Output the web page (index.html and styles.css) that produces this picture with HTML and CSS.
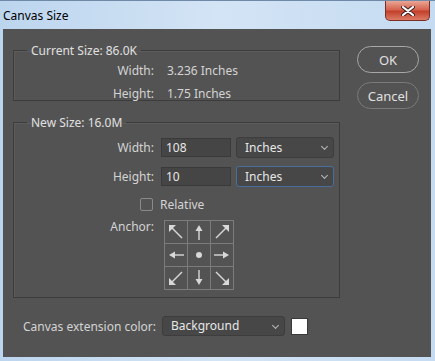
FILE: index.html
```html
<!DOCTYPE html>
<html lang="en">
<head>
    <meta charset="UTF-8">
    <title>Canvas Size</title>
    <link rel="stylesheet" href="styles.css">
</head>
<body>
    <div class="window">
        <div class="titlebar">
            <span class="title">Canvas Size</span>
            <button class="close" aria-label="Close">
                <svg width="14" height="10" viewBox="0 0 14 10">
                    <path d="M2 1 L12 9 M12 1 L2 9" stroke="#3a2020" stroke-width="4" stroke-linecap="round"/>
                    <path d="M2 1 L12 9 M12 1 L2 9" stroke="#ffffff" stroke-width="2.2" stroke-linecap="round"/>
                </svg>
            </button>
        </div>

        <div class="client">
            <div class="main">
                <!-- tamaño actual -->
                <fieldset class="group current">
                    <legend>Current Size: 86.0K</legend>
                    <div class="info-row">
                        <span class="label">Width:</span>
                        <span class="value">3.236 Inches</span>
                    </div>
                    <div class="info-row">
                        <span class="label">Height:</span>
                        <span class="value">1.75 Inches</span>
                    </div>
                </fieldset>

                <!-- tamaño nuevo -->
                <fieldset class="group new">
                    <legend>New Size: 16.0M</legend>
                    <div class="field-row">
                        <span class="label">Width:</span>
                        <input class="text-input" type="text" value="108">
                        <div class="select">Inches<span class="caret"></span></div>
                    </div>
                    <div class="field-row">
                        <span class="label">Height:</span>
                        <input class="text-input" type="text" value="10">
                        <div class="select focused">Inches<span class="caret"></span></div>
                    </div>
                    <div class="check-row">
                        <span class="checkbox"></span>
                        <span>Relative</span>
                    </div>
                    <div class="anchor-row">
                        <span class="label">Anchor:</span>
                        <div class="anchor-grid">
                            <div class="cell"><svg viewBox="0 0 22 22"><path d="M17 17 L7 7" class="shaft"/><path d="M4 4 L4 11 L11 4 Z" class="head"/></svg></div>
                            <div class="cell"><svg viewBox="0 0 22 22"><path d="M11 19 L11 8" class="shaft"/><path d="M11 4 L7.5 10 L14.5 10 Z" class="head"/></svg></div>
                            <div class="cell"><svg viewBox="0 0 22 22"><path d="M5 17 L15 7" class="shaft"/><path d="M18 4 L11 4 L18 11 Z" class="head"/></svg></div>
                            <div class="cell"><svg viewBox="0 0 22 22"><path d="M19 11 L8 11" class="shaft"/><path d="M4 11 L10 7.5 L10 14.5 Z" class="head"/></svg></div>
                            <div class="cell"><svg viewBox="0 0 22 22"><circle cx="11" cy="11" r="3" fill="#d8d8d8"/></svg></div>
                            <div class="cell"><svg viewBox="0 0 22 22"><path d="M3 11 L14 11" class="shaft"/><path d="M18 11 L12 7.5 L12 14.5 Z" class="head"/></svg></div>
                            <div class="cell"><svg viewBox="0 0 22 22"><path d="M17 5 L7 15" class="shaft"/><path d="M4 18 L4 11 L11 18 Z" class="head"/></svg></div>
                            <div class="cell"><svg viewBox="0 0 22 22"><path d="M11 3 L11 14" class="shaft"/><path d="M11 18 L7.5 12 L14.5 12 Z" class="head"/></svg></div>
                            <div class="cell"><svg viewBox="0 0 22 22"><path d="M5 5 L15 15" class="shaft"/><path d="M18 18 L18 11 L11 18 Z" class="head"/></svg></div>
                        </div>
                    </div>
                </fieldset>

                <div class="extension-row">
                    <span>Canvas extension color:</span>
                    <div class="select wide">Background<span class="caret"></span></div>
                    <span class="swatch"></span>
                </div>
            </div>

            <div class="buttons">
                <button class="btn default">OK</button>
                <button class="btn">Cancel</button>
            </div>
        </div>
    </div>
</body>
</html>
```

FILE: styles.css
```css
/* Marco de la ventana */
body {
    margin: 0;
    background-color: #c4dcf2;
    font-family: 'Noto Sans', 'Open Sans', sans-serif;
    font-size: 12px;
}

.window {
    width: 435px;
    height: 361px;
    display: flex;
    flex-direction: column;
    background: linear-gradient(90deg, #bcd5ee 0%, #d3e4f5 50%, #c5dbf1 100%);
    box-sizing: border-box;
    border-top: 1px solid #6f8aa6;
}

.titlebar {
    height: 28px;
    display: flex;
    justify-content: space-between;
    align-items: flex-start;
}

.title {
    margin: 6px 0 0 3px;
    color: #000;
    font-size: 12px;
}

.close {
    width: 45px;
    height: 20px;
    margin-right: 5px;
    padding: 0;
    border: 1px solid #7a2e24;
    border-top: none;
    border-radius: 0 0 5px 5px;
    background: linear-gradient(#eaa696 0%, #d66450 45%, #c2412b 55%, #dc7c66 100%);
    display: flex;
    align-items: center;
    justify-content: center;
}

/* Area de contenido */
.client {
    height: 328px;
    margin: 0 4px 0 3px;
    background-color: #535353;
    color: #d4d4d4;
    display: flex;
    align-items: flex-start;
}

.main {
    width: 327px;
    margin-left: 10px;
    padding-top: 13px;
}

.group {
    margin: 0;
    padding: 0;
    border: 1px solid #3c3c3c;
    box-shadow: inset 1px 1px 0 #5c5c5c;
}

.group legend {
    margin-left: 13px;
    padding: 0 4px;
    color: #e0e0e0;
}

.current {
    height: 59px;
    box-sizing: border-box;
    padding-top: 0;
}

.info-row {
    display: flex;
    height: 23px;
    align-items: center;
}

.label {
    width: 140px;
    text-align: right;
    flex-shrink: 0;
}

.info-row .value {
    margin-left: 13px;
}

.new {
    margin-top: 13px;
    height: 184px;
    box-sizing: border-box;
    padding-top: 6px;
}

.field-row {
    display: flex;
    align-items: center;
    height: 20px;
    margin-bottom: 9px;
}

.text-input {
    width: 70px;
    height: 19px;
    box-sizing: border-box;
    margin: 0 5px 0 7px;
    padding: 0 4px;
    background-color: #454545;
    border: 1px solid #3a3a3a;
    color: #e8e8e8;
    font-family: inherit;
    font-size: 12px;
    outline: none;
}

.select {
    position: relative;
    width: 98px;
    height: 21px;
    box-sizing: border-box;
    padding-left: 8px;
    line-height: 19px;
    background-color: #474747;
    border: 1px solid #3d3d3d;
    border-radius: 3px;
    color: #e8e8e8;
}

.select.focused {
    border-color: #4a6da0;
}

.caret {
    position: absolute;
    right: 6px;
    top: 6px;
    width: 4px;
    height: 4px;
    border-right: 1px solid #bbb;
    border-bottom: 1px solid #bbb;
    transform: rotate(45deg);
}

.check-row {
    display: flex;
    align-items: center;
    gap: 7px;
    margin-left: 126px;
    height: 18px;
}

.checkbox {
    width: 11px;
    height: 11px;
    border: 1px solid #8a8a8a;
    border-radius: 2px;
}

.anchor-row {
    display: flex;
    align-items: flex-start;
    margin-top: 7px;
}

.anchor-row .label {
    margin-top: -2px;
}

.anchor-grid {
    margin-left: 10px;
    display: grid;
    grid-template-columns: repeat(3, 23px);
    grid-template-rows: repeat(3, 23px);
    border-left: 1px solid #7c7c7c;
    border-top: 1px solid #7c7c7c;
}

.cell {
    border-right: 1px solid #7c7c7c;
    border-bottom: 1px solid #7c7c7c;
}

.cell svg {
    width: 22px;
    height: 22px;
    display: block;
}

.shaft {
    stroke: #d8d8d8;
    stroke-width: 1.4;
    fill: none;
}

.head {
    fill: #d8d8d8;
}

.extension-row {
    display: flex;
    align-items: center;
    margin-top: 18px;
    margin-left: 10px;
    gap: 6px;
}

.select.wide {
    width: 123px;
    height: 20px;
    line-height: 18px;
}

.swatch {
    width: 15px;
    height: 15px;
    background-color: #fff;
    border: 1px solid #3a3a3a;
}

/* Botones */
.buttons {
    display: flex;
    flex-direction: column;
    gap: 9px;
    margin-left: 17px;
    padding-top: 17px;
}

.btn {
    width: 62px;
    height: 27px;
    border: 1px solid #7a7a7a;
    border-radius: 14px;
    background-color: #535353;
    color: #e0e0e0;
    font-family: inherit;
    font-size: 13px;
    padding: 0;
}

.btn.default {
    border-color: #a8a8a8;
}
```
